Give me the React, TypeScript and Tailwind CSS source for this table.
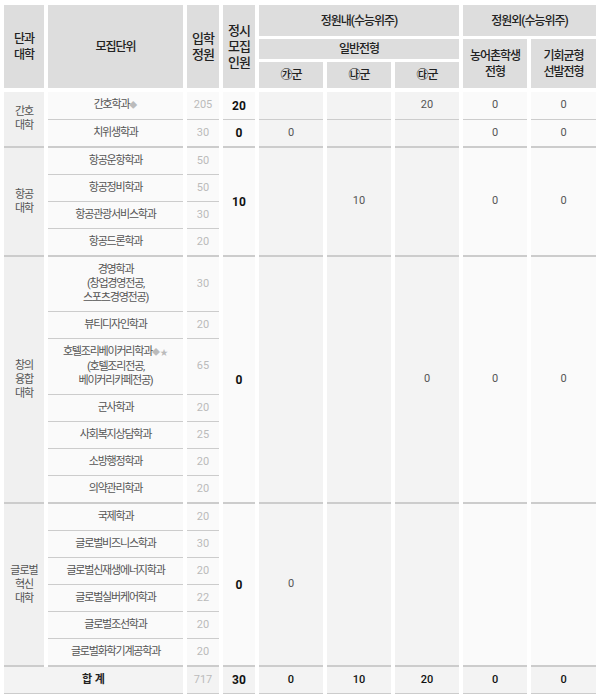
type Dept = {
  name: string;
  sub?: string[];
  mark?: string;
  quota: number;
  values?: string[];
};

type Group = {
  college: string[];
  depts: Dept[];
  values?: string[];
};

const groups: Group[] = [
  {
    college: ["간호", "대학"],
    depts: [
      { name: "간호학과", mark: "◆", quota: 205, values: ["20", "", "", "20", "0", "0"] },
      { name: "치위생학과", quota: 30, values: ["0", "0", "", "", "0", "0"] },
    ],
  },
  {
    college: ["항공", "대학"],
    depts: [
      { name: "항공운항학과", quota: 50 },
      { name: "항공정비학과", quota: 50 },
      { name: "항공관광서비스학과", quota: 30 },
      { name: "항공드론학과", quota: 20 },
    ],
    values: ["10", "", "10", "", "0", "0"],
  },
  {
    college: ["창의", "융합", "대학"],
    depts: [
      { name: "경영학과", sub: ["(창업경영전공,", "스포츠경영전공)"], quota: 30 },
      { name: "뷰티디자인학과", quota: 20 },
      { name: "호텔조리베이커리학과", mark: "◆★", sub: ["(호텔조리전공,", "베이커리카페전공)"], quota: 65 },
      { name: "군사학과", quota: 20 },
      { name: "사회복지상담학과", quota: 25 },
      { name: "소방행정학과", quota: 20 },
      { name: "의약관리학과", quota: 20 },
    ],
    values: ["0", "", "", "0", "0", "0"],
  },
  {
    college: ["글로벌", "혁신", "대학"],
    depts: [
      { name: "국제학과", quota: 20 },
      { name: "글로벌비즈니스학과", quota: 30 },
      { name: "글로벌신재생에너지학과", quota: 20 },
      { name: "글로벌실버케어학과", quota: 22 },
      { name: "글로벌조선학과", quota: 20 },
      { name: "글로벌화학기계공학과", quota: 20 },
    ],
    values: ["0", "0", "", "", "", ""],
  },
];

// background + text style of the six value columns (정시, ㉮, ㉯, ㉰, 농어촌, 기회균형)
const valueCols = [
  "bg-[#fafafa] font-bold text-[12px] text-[#111]",
  "bg-[#f3f3f3] text-[11px] text-[#555]",
  "bg-[#f3f3f3] text-[11px] text-[#555]",
  "bg-[#f3f3f3] text-[11px] text-[#555]",
  "bg-[#fafafa] text-[11px] text-[#555]",
  "bg-[#fafafa] text-[11px] text-[#555]",
];

const head = "bg-[#dddddd] text-[12px] leading-[16px] text-[#222] tracking-[-1px] font-medium text-center align-middle p-0 border-white";

export default function App() {
  return (
    <div className="bg-white pt-[5px] font-['Roboto','Noto_Sans_CJK_KR',sans-serif]">
      <table className="w-full table-fixed border-separate border-spacing-x-[4px] border-spacing-y-0">
        <colgroup>
          <col className="w-[40px]" />
          <col className="w-[135px]" />
          <col className="w-[32px]" />
          <col className="w-[32px]" />
          <col className="w-[64px]" />
          <col className="w-[64px]" />
          <col className="w-[64px]" />
          <col className="w-[64px]" />
          <col />
        </colgroup>
        <thead>
          <tr className="h-[34px]">
            <th rowSpan={3} className={`${head} border-b-4`}>
              단과
              <br />
              대학
            </th>
            <th rowSpan={3} className={`${head} border-b-4`}>
              모집단위
            </th>
            <th rowSpan={3} className={`${head} border-b-4 text-[13px]`}>
              입학
              <br />
              정원
            </th>
            <th rowSpan={3} className={`${head} border-b-4 text-[13px]`}>
              정시
              <br />
              모집
              <br />
              인원
            </th>
            <th colSpan={3} className={`${head} border-b-[3px]`}>
              정원내(수능위주)
            </th>
            <th colSpan={2} className={`${head} border-b-[3px]`}>
              정원외(수능위주)
            </th>
          </tr>
          <tr className="h-[23px]">
            <th colSpan={3} className={`${head} border-b-[3px]`}>
              일반전형
            </th>
            <th rowSpan={2} className={`${head} border-b-4`}>
              농어촌학생
              <br />
              전형
            </th>
            <th rowSpan={2} className={`${head} border-b-4`}>
              기회균형
              <br />
              선발전형
            </th>
          </tr>
          <tr className="h-[30px]">
            <th className={`${head} border-b-4`}>㉮군</th>
            <th className={`${head} border-b-4`}>㉯군</th>
            <th className={`${head} border-b-4`}>㉰군</th>
          </tr>
        </thead>
        <tbody>
          {groups.map((g) =>
            g.depts.map((d, i) => {
              const last = i === g.depts.length - 1;
              const line = last ? "border-b-2" : "border-b";
              const rows = g.depts.length;
              return (
                <tr key={d.name}>
                  {i === 0 && (
                    <td
                      rowSpan={rows}
                      className="bg-[#f0f0f0] border-b-2 border-[#cccccc] text-center align-middle text-[11px] leading-[14px] text-[#555] tracking-[-1px] p-0"
                    >
                      {g.college.map((c) => (
                        <div key={c}>{c}</div>
                      ))}
                    </td>
                  )}
                  <td className={`bg-[#fafafa] ${line} border-[#cccccc] text-center align-middle py-[6px] px-0 text-[11px] leading-[14px] text-[#555] tracking-[-1.2px]`}>
                    <div>
                      {d.name}
                      {d.mark && <span className="text-[8px] text-[#bbbbbb] tracking-normal">{d.mark}</span>}
                    </div>
                    {d.sub?.map((s) => (
                      <div key={s}>{s}</div>
                    ))}
                  </td>
                  <td className={`bg-[#fafafa] ${line} border-[#cccccc] text-center align-middle p-0 text-[11px] text-[#bbbbbb]`}>
                    {d.quota}
                  </td>
                  {d.values
                    ? d.values.map((v, k) => (
                        <td key={k} className={`${valueCols[k]} ${line} border-[#cccccc] text-center align-middle p-0`}>
                          {v}
                        </td>
                      ))
                    : i === 0 &&
                      g.values?.map((v, k) => (
                        <td
                          key={k}
                          rowSpan={rows}
                          className={`${valueCols[k]} border-b-2 border-[#cccccc] text-center align-middle p-0`}
                        >
                          {v}
                        </td>
                      ))}
                </tr>
              );
            })
          )}
          <tr className="h-[28px]">
            <td colSpan={2} className="bg-[#f3f3f3] border-b-2 border-[#cccccc] text-center align-middle p-0 text-[11px] font-bold text-[#222]">
              합 계
            </td>
            <td className="bg-[#f3f3f3] border-b-2 border-[#cccccc] text-center align-middle p-0 text-[11px] text-[#bbbbbb]">
              717
            </td>
            {["30", "0", "10", "20", "0", "0"].map((v, k) => (
              <td
                key={k}
                className={`bg-[#f3f3f3] border-b-2 border-[#cccccc] text-center align-middle p-0 text-[#111] ${k === 0 ? "text-[12px] font-bold" : "text-[11px] font-medium"}`}
              >
                {v}
              </td>
            ))}
          </tr>
        </tbody>
      </table>
    </div>
  );
}
